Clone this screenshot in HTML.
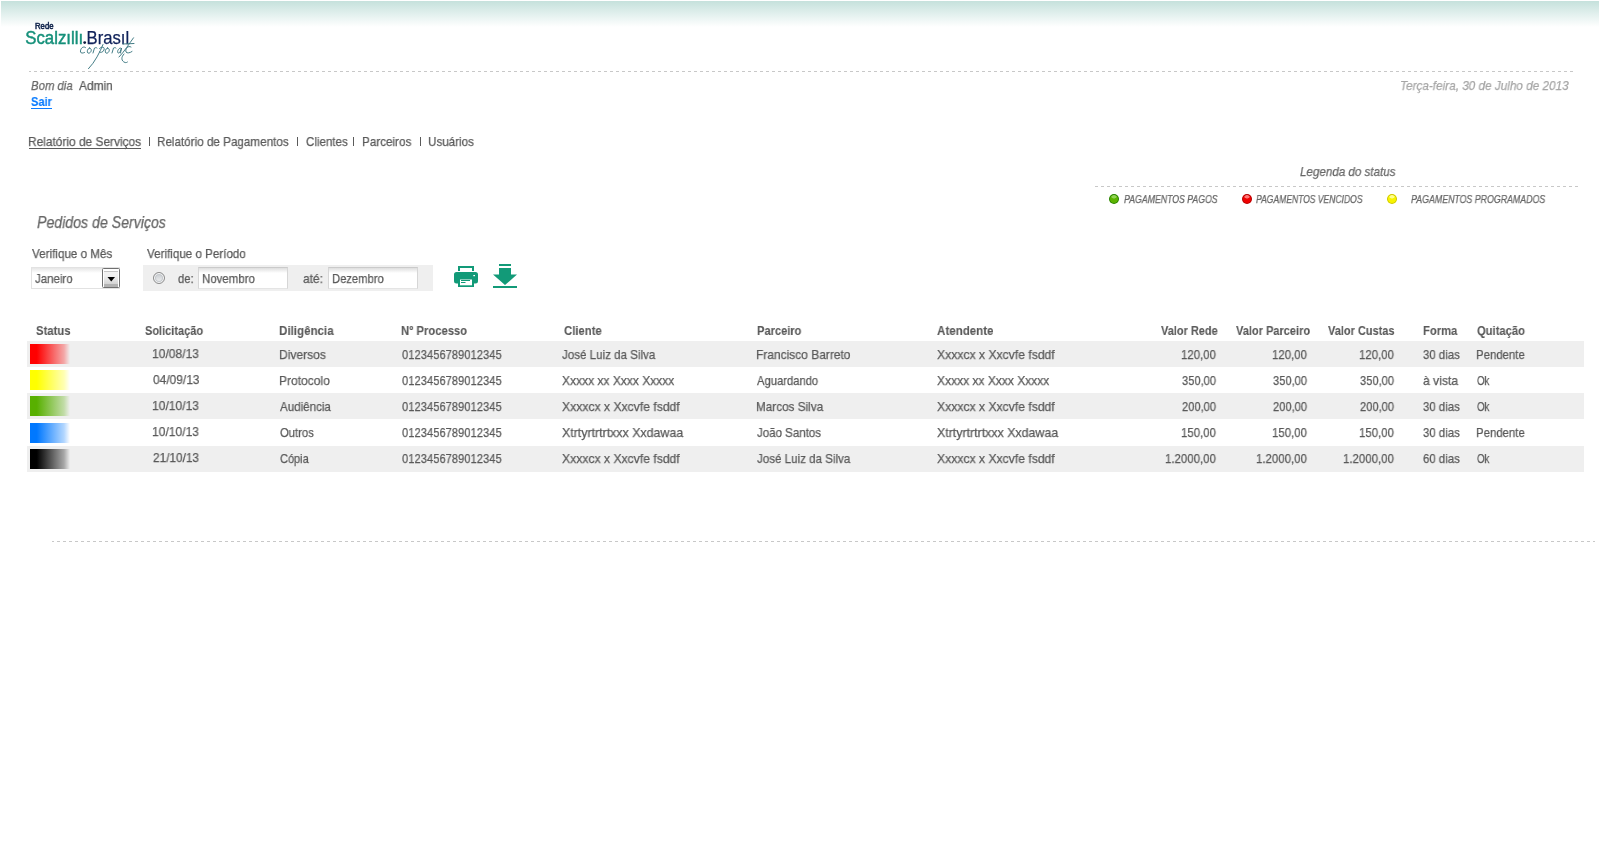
<!DOCTYPE html>
<html><head><meta charset="utf-8">
<style>
html,body{margin:0;padding:0;background:#fff;width:1600px;height:862px;overflow:hidden;position:relative}
body{font-family:"Liberation Sans",sans-serif}
.t{position:absolute;white-space:pre;transform-origin:0 0;font-family:"Liberation Sans",sans-serif;-webkit-text-stroke:0.25px currentColor;will-change:transform}
.a{position:absolute}
.dash{position:absolute;height:1px}
.row{position:absolute;left:27px;width:1557px;height:26px}
.g{background:#efefef}
.sw{position:absolute;left:30px;width:40px;height:20px}
</style></head><body>
<div class="a" style="left:1px;top:1px;width:1598px;height:26px;background:linear-gradient(#c5e1dc,#ffffff)"></div>

<!-- logo -->
<svg class="a" style="left:0;top:0;will-change:transform" width="160" height="80" viewBox="0 0 160 80">
 <text x="35" y="29" font-family="Liberation Sans" font-size="8.2" fill="#14284f" stroke="#14284f" stroke-width="0.55" textLength="18.5" lengthAdjust="spacingAndGlyphs">Rede</text>
 <text x="25.3" y="44" font-family="Liberation Sans" font-size="17.5" fill="#15907a" textLength="57.8" lengthAdjust="spacingAndGlyphs" stroke="#15907a" stroke-width="0.45">Scalzıllı</text>
 <circle cx="84.7" cy="42.6" r="1.4" fill="#101c40"/>
 <text x="86.6" y="44" font-family="Liberation Sans" font-size="17.5" fill="#10225a" textLength="42.6" lengthAdjust="spacingAndGlyphs" stroke="#10225a" stroke-width="0.25">Brasıl</text>
 <g fill="none" stroke="#3a7680" stroke-width="0.95" stroke-linecap="round">
  <path d="M85.5 47.5 C83 45.5 80 49 80.5 52 C81 53.5 83 53.2 84.5 52.5"/>
  <path d="M89.5 48 C87 48.5 86.5 53 88.5 53.2 C91 53.3 93 48.5 89.5 48 Z"/>
  <path d="M93 53 L94.5 48 C95.5 47.5 96.5 47.5 97 48"/>
  <path d="M103 44.5 C100 52 95 62 88.5 68.7"/>
  <path d="M99.5 48.5 C102 46 105 47 104 50 C103 52.5 100 53 99.5 52"/>
  <path d="M107.5 48 C105 48.5 104.5 53 106.5 53.2 C109 53.3 111 48.5 107.5 48 Z"/>
  <path d="M112 53 L113.5 48 C114.5 47.5 115.5 47.5 116 48"/>
  <path d="M120.5 48 C118 48 116.5 53 118.5 53 C120 53 121 50 121.5 48 L120.5 53"/>
  <path d="M133.5 37.8 C129 44 124 52 119 57"/>
  <path d="M123 44 L134 43.5"/>
  <path d="M131 47 C128 45 125 49 126 52 C127 53.5 130 53 132 51.5"/>
  <path d="M124 54 C121 57 121 61 125 62.5 C126 62.8 127 62.5 127.5 62"/>
 </g>
</svg>

<div class="dash" style="left:29px;top:71px;width:1544px;background:repeating-linear-gradient(to right,#c8c8c8 0 2px,transparent 2px 5px,#c8c8c8 5px 6px)"></div>
<div class="dash" style="left:1095px;top:186px;width:483px;background:repeating-linear-gradient(to right,#c8c8c8 0 3px,transparent 3px 6px)"></div>
<div class="dash" style="left:52px;top:541px;width:1543px;background:repeating-linear-gradient(to right,#c8c8c8 0 2px,transparent 2px 5px,#c8c8c8 5px 6px)"></div>

<!-- underlines -->
<div class="a" style="left:31px;top:108px;width:21px;height:1px;background:#0a7cff"></div>
<div class="a" style="left:29px;top:148px;width:112px;height:1px;background:#5a5a5a"></div>
<!-- nav separators -->
<div class="a" style="left:149px;top:137px;width:1px;height:9px;background:#5a5a5a"></div>
<div class="a" style="left:297px;top:137px;width:1px;height:9px;background:#5a5a5a"></div>
<div class="a" style="left:353px;top:137px;width:1px;height:9px;background:#5a5a5a"></div>
<div class="a" style="left:420px;top:137px;width:1px;height:9px;background:#5a5a5a"></div>

<!-- legend dots -->
<div class="a" style="left:1109px;top:194px;width:10px;height:10px;border-radius:50%;background:radial-gradient(ellipse 3px 2px at 50% 28%,#92d456 0,#92d456 70%,transparent 100%),#5cb400;box-shadow:inset 0 0 0 1px #1f7a00"></div>
<div class="a" style="left:1242px;top:194px;width:10px;height:10px;border-radius:50%;background:radial-gradient(ellipse 3px 2px at 50% 28%,#ff7878 0,#ff7878 70%,transparent 100%),#f00000;box-shadow:inset 0 0 0 1px #a80000"></div>
<div class="a" style="left:1387px;top:194px;width:10px;height:10px;border-radius:50%;background:radial-gradient(ellipse 3px 2px at 50% 28%,#ffff90 0,#ffff90 70%,transparent 100%),#f8f400;box-shadow:inset 0 0 0 1px #c8c000"></div>

<!-- month select -->
<div class="a" style="left:31px;top:267px;width:89px;height:22px;box-sizing:border-box;border:1px solid #e2e2e2;background:linear-gradient(#e6e6e6,#fff 5px)"></div>
<div class="a" style="left:102px;top:268px;width:18px;height:20px;box-sizing:border-box;border:1px solid #707070;border-radius:1.5px;box-shadow:inset 1px 1px 0 #fff,inset -1px 0 0 #fff;background:linear-gradient(#fff 0,#fff 2px,#c4c4c4 2px,#c4c4c4 3px,#f2f2f2 3px,#f0f0f0 40%,#d2d2d2 85%,#b2b2b2 85%)"></div>
<svg class="a" style="left:100px;top:270px" width="20" height="15"><path d="M7.5 7h7.5l-3.75 4.5z" fill="#000"/></svg>

<!-- period box -->
<div class="a" style="left:143px;top:265px;width:290px;height:26px;background:#efefef"></div>
<div class="a" style="left:153px;top:272px;width:12px;height:12px;box-sizing:border-box;border-radius:50%;border:1px solid #8c8c8c;box-shadow:inset 0 0 0 1px #fbfbfb,inset 0 0 0 2px #c4c8cc;background:linear-gradient(#c4c8cd,#f4f4f4)"></div>
<div class="a" style="left:198px;top:267px;width:90px;height:22px;box-sizing:border-box;border:1px solid #d6d6d6;border-top-color:#cacaca;border-bottom-color:#e4e4e4;background:linear-gradient(#dedede,#fff 5px)"></div>
<div class="a" style="left:328px;top:267px;width:90px;height:22px;box-sizing:border-box;border:1px solid #d6d6d6;border-top-color:#cacaca;border-bottom-color:#e4e4e4;background:linear-gradient(#dedede,#fff 5px)"></div>

<!-- icons -->
<svg class="a" style="left:445px;top:255px" width="80" height="40" viewBox="0 0 80 40">
 <g fill="#129a78">
  <path d="M13 11h16v5h-2v-3h-12v3h-2z"/>
  <path d="M11.5 17h19a2.5 2.5 0 0 1 2.5 2.5v6.5a2.5 2.5 0 0 1 -2.5 2.5h-1.5v3.5h-16v-3.5h-1.5a2.5 2.5 0 0 1 -2.5 -2.5v-6.5a2.5 2.5 0 0 1 2.5 -2.5z"/>
  <path d="M54 9h12v2h-12z"/>
  <path d="M54 13h12v6.5h6l-12 10.5l-12 -10.5h6z"/>
  <path d="M48 31h24v2h-24z"/>
 </g>
 <rect x="15" y="24.5" width="12" height="5.8" fill="#fff"/>
 <rect x="16" y="25" width="9" height="1" fill="#129a78"/>
 <rect x="16" y="27" width="4.5" height="1" fill="#129a78"/>
 <rect x="28.3" y="20" width="1.7" height="1.2" fill="#fff"/>
</svg>

<!-- table rows -->
<div class="row g" style="top:341px"></div>
<div class="row g" style="top:393px"></div>
<div class="row g" style="top:446px"></div>
<div class="sw" style="top:344px;background:linear-gradient(to right,#ff0000 0,#ff0000 17%,rgba(255,0,0,0.3) 85%,rgba(255,0,0,0) 100%)"></div>
<div class="sw" style="top:370px;background:linear-gradient(to right,#ffff00 0,#ffff00 17%,rgba(255,255,0,0.3) 85%,rgba(255,255,0,0) 100%)"></div>
<div class="sw" style="top:396px;background:linear-gradient(to right,#58b000 0,#58b000 17%,rgba(88,176,0,0.3) 85%,rgba(88,176,0,0) 100%)"></div>
<div class="sw" style="top:423px;background:linear-gradient(to right,#0078ff 0,#0078ff 17%,rgba(0,120,255,0.3) 85%,rgba(0,120,255,0) 100%)"></div>
<div class="sw" style="top:449px;background:linear-gradient(to right,#000 0,#000 17%,rgba(0,0,0,0.3) 85%,rgba(0,0,0,0) 100%)"></div>

<div class="t" style="left:31.00px;top:79px;font-size:13px;line-height:13px;font-style:italic;color:#676767;transform:scaleX(0.8750);">Bom dia</div>
<div class="t" style="left:79.30px;top:79px;font-size:13px;line-height:13px;color:#5a5a5a;transform:scaleX(0.9167);">Admin</div>
<div class="t" style="left:31.25px;top:95px;font-size:13px;line-height:13px;font-weight:700;-webkit-text-stroke:0.1px currentColor;color:#0a7cff;transform:scaleX(0.8500);">Sair</div>
<div class="t" style="left:1400.10px;top:79px;font-size:13px;line-height:13px;font-style:italic;color:#a6a6a6;transform:scaleX(0.9032);">Terça-feira, 30 de Julho de 2013</div>
<div class="t" style="left:28.38px;top:135px;font-size:13px;line-height:13px;color:#5a5a5a;transform:scaleX(0.9156);">Relatório de Serviços</div>
<div class="t" style="left:157.10px;top:135px;font-size:13px;line-height:13px;color:#5a5a5a;transform:scaleX(0.8973);">Relatório de Pagamentos</div>
<div class="t" style="left:306.25px;top:135px;font-size:13px;line-height:13px;color:#5a5a5a;transform:scaleX(0.8883);">Clientes</div>
<div class="t" style="left:361.85px;top:135px;font-size:13px;line-height:13px;color:#5a5a5a;transform:scaleX(0.8981);">Parceiros</div>
<div class="t" style="left:428.11px;top:135px;font-size:13px;line-height:13px;color:#5a5a5a;transform:scaleX(0.8950);">Usuários</div>
<div class="t" style="left:1300.00px;top:165px;font-size:13px;line-height:13px;font-style:italic;color:#676767;transform:scaleX(0.8925);">Legenda do status</div>
<div class="t" style="left:1123.50px;top:194px;font-size:10.5px;line-height:10.5px;font-style:italic;color:#676767;transform:scaleX(0.8319);">PAGAMENTOS PAGOS</div>
<div class="t" style="left:1255.50px;top:194px;font-size:10.5px;line-height:10.5px;font-style:italic;color:#676767;transform:scaleX(0.8130);">PAGAMENTOS VENCIDOS</div>
<div class="t" style="left:1410.60px;top:194px;font-size:10.5px;line-height:10.5px;font-style:italic;color:#676767;transform:scaleX(0.8388);">PAGAMENTOS PROGRAMADOS</div>
<div class="t" style="left:37.00px;top:215px;font-size:16px;line-height:16px;font-style:italic;color:#676767;transform:scaleX(0.8836);">Pedidos de Serviços</div>
<div class="t" style="left:32.20px;top:247px;font-size:13px;line-height:13px;color:#5a5a5a;transform:scaleX(0.8966);">Verifique o Mês</div>
<div class="t" style="left:147.20px;top:247px;font-size:13px;line-height:13px;color:#5a5a5a;transform:scaleX(0.8936);">Verifique o Período</div>
<div class="t" style="left:35.20px;top:272px;font-size:13px;line-height:13px;color:#5a5a5a;transform:scaleX(0.8814);">Janeiro</div>
<div class="t" style="left:177.80px;top:272px;font-size:13px;line-height:13px;color:#5a5a5a;transform:scaleX(0.8647);">de:</div>
<div class="t" style="left:201.62px;top:272px;font-size:13px;line-height:13px;color:#5a5a5a;transform:scaleX(0.8814);">Novembro</div>
<div class="t" style="left:303.25px;top:272px;font-size:13px;line-height:13px;color:#5a5a5a;transform:scaleX(0.9214);">até:</div>
<div class="t" style="left:331.54px;top:272px;font-size:13px;line-height:13px;color:#5a5a5a;transform:scaleX(0.8619);">Dezembro</div>
<div class="t" style="left:36.25px;top:324px;font-size:13px;line-height:13px;font-weight:700;-webkit-text-stroke:0.1px currentColor;color:#5a5a5a;transform:scaleX(0.8688);">Status</div>
<div class="t" style="left:145.40px;top:324px;font-size:13px;line-height:13px;font-weight:700;-webkit-text-stroke:0.1px currentColor;color:#5a5a5a;transform:scaleX(0.8457);">Solicitação</div>
<div class="t" style="left:278.61px;top:324px;font-size:13px;line-height:13px;font-weight:700;-webkit-text-stroke:0.1px currentColor;color:#5a5a5a;transform:scaleX(0.8893);">Diligência</div>
<div class="t" style="left:401.13px;top:324px;font-size:13px;line-height:13px;font-weight:700;-webkit-text-stroke:0.1px currentColor;color:#5a5a5a;transform:scaleX(0.8667);">Nº Processo</div>
<div class="t" style="left:563.75px;top:324px;font-size:13px;line-height:13px;font-weight:700;-webkit-text-stroke:0.1px currentColor;color:#5a5a5a;transform:scaleX(0.8721);">Cliente</div>
<div class="t" style="left:756.65px;top:324px;font-size:13px;line-height:13px;font-weight:700;-webkit-text-stroke:0.1px currentColor;color:#5a5a5a;transform:scaleX(0.8529);">Parceiro</div>
<div class="t" style="left:937.00px;top:324px;font-size:13px;line-height:13px;font-weight:700;-webkit-text-stroke:0.1px currentColor;color:#5a5a5a;transform:scaleX(0.8889);">Atendente</div>
<div class="t" style="left:1160.50px;top:324px;font-size:13px;line-height:13px;font-weight:700;-webkit-text-stroke:0.1px currentColor;color:#5a5a5a;transform:scaleX(0.8433);">Valor Rede</div>
<div class="t" style="left:1235.50px;top:324px;font-size:13px;line-height:13px;font-weight:700;-webkit-text-stroke:0.1px currentColor;color:#5a5a5a;transform:scaleX(0.8477);">Valor Parceiro</div>
<div class="t" style="left:1328.00px;top:324px;font-size:13px;line-height:13px;font-weight:700;-webkit-text-stroke:0.1px currentColor;color:#5a5a5a;transform:scaleX(0.8443);">Valor Custas</div>
<div class="t" style="left:1422.54px;top:324px;font-size:13px;line-height:13px;font-weight:700;-webkit-text-stroke:0.1px currentColor;color:#5a5a5a;transform:scaleX(0.8615);">Forma</div>
<div class="t" style="left:1477.30px;top:324px;font-size:13px;line-height:13px;font-weight:700;-webkit-text-stroke:0.1px currentColor;color:#5a5a5a;transform:scaleX(0.8607);">Quitação</div>
<div class="t" style="left:152.07px;top:347px;font-size:13px;line-height:13px;color:#5a5a5a;transform:scaleX(0.9286);">10/08/13</div>
<div class="t" style="left:279.07px;top:348px;font-size:13px;line-height:13px;color:#5a5a5a;transform:scaleX(0.9286);">Diversos</div>
<div class="t" style="left:402.00px;top:348px;font-size:13px;line-height:13px;color:#5a5a5a;transform:scaleX(0.8621);">0123456789012345</div>
<div class="t" style="left:562.00px;top:348px;font-size:13px;line-height:13px;color:#5a5a5a;transform:scaleX(0.8905);">José Luiz da Silva</div>
<div class="t" style="left:756.08px;top:348px;font-size:13px;line-height:13px;color:#5a5a5a;transform:scaleX(0.9208);">Francisco Barreto</div>
<div class="t" style="left:937.00px;top:348px;font-size:13px;line-height:13px;color:#5a5a5a;transform:scaleX(0.9365);">Xxxxcx x Xxcvfe fsddf</div>
<div class="t" style="left:1181.12px;top:348px;font-size:13px;line-height:13px;color:#5a5a5a;transform:scaleX(0.8782);">120,00</div>
<div class="t" style="left:1271.87px;top:348px;font-size:13px;line-height:13px;color:#5a5a5a;transform:scaleX(0.8782);">120,00</div>
<div class="t" style="left:1358.67px;top:348px;font-size:13px;line-height:13px;color:#5a5a5a;transform:scaleX(0.8782);">120,00</div>
<div class="t" style="left:1423.00px;top:348px;font-size:13px;line-height:13px;color:#5a5a5a;transform:scaleX(0.8762);">30 dias</div>
<div class="t" style="left:1476.42px;top:348px;font-size:13px;line-height:13px;color:#5a5a5a;transform:scaleX(0.8764);">Pendente</div>
<div class="t" style="left:153.00px;top:373px;font-size:13px;line-height:13px;color:#5a5a5a;transform:scaleX(0.9200);">04/09/13</div>
<div class="t" style="left:279.07px;top:374px;font-size:13px;line-height:13px;color:#5a5a5a;transform:scaleX(0.9259);">Protocolo</div>
<div class="t" style="left:402.00px;top:374px;font-size:13px;line-height:13px;color:#5a5a5a;transform:scaleX(0.8621);">0123456789012345</div>
<div class="t" style="left:562.00px;top:374px;font-size:13px;line-height:13px;color:#5a5a5a;transform:scaleX(0.9256);">Xxxxx xx Xxxx Xxxxx</div>
<div class="t" style="left:757.00px;top:374px;font-size:13px;line-height:13px;color:#5a5a5a;transform:scaleX(0.8627);">Aguardando</div>
<div class="t" style="left:937.00px;top:374px;font-size:13px;line-height:13px;color:#5a5a5a;transform:scaleX(0.9256);">Xxxxx xx Xxxx Xxxxx</div>
<div class="t" style="left:1182.00px;top:374px;font-size:13px;line-height:13px;color:#5a5a5a;transform:scaleX(0.8562);">350,00</div>
<div class="t" style="left:1272.75px;top:374px;font-size:13px;line-height:13px;color:#5a5a5a;transform:scaleX(0.8562);">350,00</div>
<div class="t" style="left:1359.55px;top:374px;font-size:13px;line-height:13px;color:#5a5a5a;transform:scaleX(0.8562);">350,00</div>
<div class="t" style="left:1423.00px;top:374px;font-size:13px;line-height:13px;color:#5a5a5a;transform:scaleX(0.9342);">à vista</div>
<div class="t" style="left:1477.30px;top:374px;font-size:13px;line-height:13px;color:#5a5a5a;transform:scaleX(0.7471);">Ok</div>
<div class="t" style="left:152.07px;top:399px;font-size:13px;line-height:13px;color:#5a5a5a;transform:scaleX(0.9286);">10/10/13</div>
<div class="t" style="left:280.00px;top:400px;font-size:13px;line-height:13px;color:#5a5a5a;transform:scaleX(0.8904);">Audiência</div>
<div class="t" style="left:402.00px;top:400px;font-size:13px;line-height:13px;color:#5a5a5a;transform:scaleX(0.8621);">0123456789012345</div>
<div class="t" style="left:562.00px;top:400px;font-size:13px;line-height:13px;color:#5a5a5a;transform:scaleX(0.9365);">Xxxxcx x Xxcvfe fsddf</div>
<div class="t" style="left:756.10px;top:400px;font-size:13px;line-height:13px;color:#5a5a5a;transform:scaleX(0.9020);">Marcos Silva</div>
<div class="t" style="left:937.00px;top:400px;font-size:13px;line-height:13px;color:#5a5a5a;transform:scaleX(0.9365);">Xxxxcx x Xxcvfe fsddf</div>
<div class="t" style="left:1182.00px;top:400px;font-size:13px;line-height:13px;color:#5a5a5a;transform:scaleX(0.8562);">200,00</div>
<div class="t" style="left:1272.75px;top:400px;font-size:13px;line-height:13px;color:#5a5a5a;transform:scaleX(0.8562);">200,00</div>
<div class="t" style="left:1359.55px;top:400px;font-size:13px;line-height:13px;color:#5a5a5a;transform:scaleX(0.8562);">200,00</div>
<div class="t" style="left:1423.00px;top:400px;font-size:13px;line-height:13px;color:#5a5a5a;transform:scaleX(0.8762);">30 dias</div>
<div class="t" style="left:1477.30px;top:400px;font-size:13px;line-height:13px;color:#5a5a5a;transform:scaleX(0.7471);">Ok</div>
<div class="t" style="left:152.07px;top:425px;font-size:13px;line-height:13px;color:#5a5a5a;transform:scaleX(0.9286);">10/10/13</div>
<div class="t" style="left:280.00px;top:426px;font-size:13px;line-height:13px;color:#5a5a5a;transform:scaleX(0.8654);">Outros</div>
<div class="t" style="left:402.00px;top:426px;font-size:13px;line-height:13px;color:#5a5a5a;transform:scaleX(0.8621);">0123456789012345</div>
<div class="t" style="left:562.00px;top:426px;font-size:13px;line-height:13px;color:#5a5a5a;transform:scaleX(0.9528);">Xtrtyrtrtrtxxx Xxdawaa</div>
<div class="t" style="left:757.00px;top:426px;font-size:13px;line-height:13px;color:#5a5a5a;transform:scaleX(0.8854);">João Santos</div>
<div class="t" style="left:937.00px;top:426px;font-size:13px;line-height:13px;color:#5a5a5a;transform:scaleX(0.9528);">Xtrtyrtrtrtxxx Xxdawaa</div>
<div class="t" style="left:1181.12px;top:426px;font-size:13px;line-height:13px;color:#5a5a5a;transform:scaleX(0.8782);">150,00</div>
<div class="t" style="left:1271.87px;top:426px;font-size:13px;line-height:13px;color:#5a5a5a;transform:scaleX(0.8782);">150,00</div>
<div class="t" style="left:1358.67px;top:426px;font-size:13px;line-height:13px;color:#5a5a5a;transform:scaleX(0.8782);">150,00</div>
<div class="t" style="left:1423.00px;top:426px;font-size:13px;line-height:13px;color:#5a5a5a;transform:scaleX(0.8762);">30 dias</div>
<div class="t" style="left:1476.42px;top:426px;font-size:13px;line-height:13px;color:#5a5a5a;transform:scaleX(0.8764);">Pendente</div>
<div class="t" style="left:153.00px;top:451px;font-size:13px;line-height:13px;color:#5a5a5a;transform:scaleX(0.9100);">21/10/13</div>
<div class="t" style="left:280.00px;top:452px;font-size:13px;line-height:13px;color:#5a5a5a;transform:scaleX(0.8456);">Cópia</div>
<div class="t" style="left:402.00px;top:452px;font-size:13px;line-height:13px;color:#5a5a5a;transform:scaleX(0.8621);">0123456789012345</div>
<div class="t" style="left:562.00px;top:452px;font-size:13px;line-height:13px;color:#5a5a5a;transform:scaleX(0.9365);">Xxxxcx x Xxcvfe fsddf</div>
<div class="t" style="left:757.00px;top:452px;font-size:13px;line-height:13px;color:#5a5a5a;transform:scaleX(0.8905);">José Luiz da Silva</div>
<div class="t" style="left:937.00px;top:452px;font-size:13px;line-height:13px;color:#5a5a5a;transform:scaleX(0.9365);">Xxxxcx x Xxcvfe fsddf</div>
<div class="t" style="left:1165.12px;top:452px;font-size:13px;line-height:13px;color:#5a5a5a;transform:scaleX(0.8816);">1.2000,00</div>
<div class="t" style="left:1255.87px;top:452px;font-size:13px;line-height:13px;color:#5a5a5a;transform:scaleX(0.8816);">1.2000,00</div>
<div class="t" style="left:1342.67px;top:452px;font-size:13px;line-height:13px;color:#5a5a5a;transform:scaleX(0.8816);">1.2000,00</div>
<div class="t" style="left:1423.00px;top:452px;font-size:13px;line-height:13px;color:#5a5a5a;transform:scaleX(0.8762);">60 dias</div>
<div class="t" style="left:1477.30px;top:452px;font-size:13px;line-height:13px;color:#5a5a5a;transform:scaleX(0.7471);">Ok</div>
</body></html>
